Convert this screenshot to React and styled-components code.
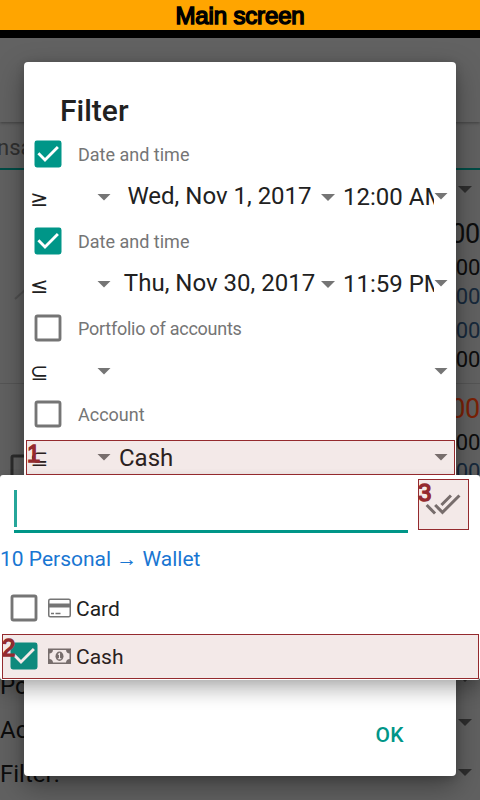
import React from "react";
import styled, { createGlobalStyle } from "styled-components";

const Global = createGlobalStyle`
  * { box-sizing: border-box; }
  body { margin: 0; background: #616161; }
`;

const Screen = styled.div`
  position: relative;
  width: 480px;
  height: 800px;
  overflow: hidden;
  background: #616161;
  color: #212121;
  font-family: Roboto, sans-serif;
  white-space: nowrap;
`;

const Banner = styled.h1`
  margin: 0;
  height: 30px;
  background: #ffa500;
  color: #000;
  font: 400 24px/31px "Liberation Sans", sans-serif;
  letter-spacing: -0.15px;
  text-align: center;
  -webkit-text-stroke: 1.5px #000;
`;

const StatusBar = styled.div`
  height: 8px;
  background: #000;
`;

const AppBar = styled.div`
  height: 84px;
  background: #626262;
  box-shadow: 0 1px 3px rgba(0, 0, 0, 0.35);
`;

const TabStrip = styled.div`
  height: 48px;
  padding-top: 13px;
  border-bottom: 2px solid #004c46;
  color: #303030;
  font-size: 22px;
  line-height: 26px;
  text-indent: -3px;
`;

const Backdrop = styled.div`
  display: flex;
  justify-content: space-between;
  height: 630px;
`;

const LeftColumn = styled.div`
  flex: 1;
`;

const ChevronCell = styled.div`
  height: 214px;
  padding: 115px 0 0 14px;
  border-bottom: 1px solid #555;
`;

const BoxCell = styled.div`
  height: 280px;
  padding: 66px 0 0 6px;
`;

const BackLabel = styled.div`
  height: 44px;
  font-size: 24px;
  line-height: 44px;
  color: #0d0d0d;
`;

const RightColumn = styled.div`
  display: flex;
  flex-direction: column;
  align-items: flex-end;
  width: 80px;
`;

const Amount = styled.div`
  flex: none;
  height: ${(p) => p.$h}px;
  line-height: ${(p) => p.$h + 2}px;
  font-size: ${(p) => (p.$big ? 27 : 22)}px;
  letter-spacing: -0.3px;
  color: ${(p) => p.$color || "#0d0d0d"};
`;

const Rule = styled.div`
  flex: none;
  width: 100%;
  height: 1px;
  margin-top: 9px;
  background: #555;
`;

const ArrowSlot = styled.div`
  display: flex;
  flex: none;
  align-items: center;
  height: ${(p) => p.$h}px;
  margin-top: ${(p) => p.$gap || 0}px;
  padding-right: 8px;
`;

const Arrow = styled.span`
  flex: none;
  width: 14px;
  height: 7px;
  margin-top: ${(p) => p.$drop || 0}px;
  background: ${(p) => p.$color || "#757575"};
  clip-path: polygon(0 0, 100% 0, 50% 100%);
`;

const Dialog = styled.section`
  position: absolute;
  left: 24px;
  top: 62px;
  width: 432px;
  height: 714px;
  padding: 26px 0 0 6px;
  display: flex;
  flex-direction: column;
  border-radius: 4px;
  background: #fff;
  box-shadow: 0 10px 28px rgba(0, 0, 0, 0.36), 0 2px 8px rgba(0, 0, 0, 0.16);
`;

const Title = styled.h2`
  margin: 0 0 0 30px;
  height: 44px;
  font-size: 30px;
  font-weight: 500;
  line-height: 46px;
`;

const Condition = styled.div`
  height: ${(p) => p.$h || 87}px;
`;

const CheckLine = styled.label`
  display: flex;
  align-items: center;
  gap: 12px;
  height: 44px;
  color: #757575;
  font-size: 18px;
  letter-spacing: ${(p) => p.$tracking || 0}px;
`;

const ValueLine = styled.div`
  display: flex;
  align-items: center;
  height: 42px;
  font-size: 24px;
`;

const Operator = styled.span`
  display: flex;
  align-items: center;
  justify-content: space-between;
  width: 81px;
`;

const Symbol = styled.span`
  padding-top: 3px;
  font: 22px/26px "DejaVu Sans", sans-serif;
`;

const DateValue = styled.span`
  width: 210px;
  padding: 0 0 2px 7px;
  text-align: center;
`;

const TimeValue = styled.span`
  width: 91px;
  margin-left: 8px;
  overflow: hidden;
`;

const AccountValue = styled.span`
  width: 323px;
  padding: 2px 0 0 8px;
`;

const OkButton = styled.button`
  align-self: flex-end;
  margin: auto 36px 23px 0;
  padding: 0 16px;
  height: 36px;
  border: 0;
  background: none;
  color: #009688;
  font: 500 21px/36px Roboto, sans-serif;
  letter-spacing: 0.4px;
`;

const Popup = styled.section`
  position: absolute;
  left: 0;
  top: 475px;
  width: 480px;
  height: 205px;
  border-radius: 3px;
  background: #fff;
  box-shadow: 0 12px 18px rgba(0, 0, 0, 0.24), 0 2px 8px rgba(0, 0, 0, 0.1);
`;

const SearchRow = styled.div`
  display: flex;
  height: 58px;
  padding-left: 14px;
`;

const SearchField = styled.div`
  width: 394px;
  padding-top: 15px;
  border-bottom: 3px solid #009688;
`;

const Caret = styled.div`
  width: 3px;
  height: 37px;
  background: #26a69a;
`;

const SelectAll = styled.div`
  display: flex;
  margin: 11px 0 0 17px;
  height: 36px;
`;

const GroupName = styled.div`
  height: 51px;
  color: #1976d2;
  font-size: 21px;
  line-height: 52px;
`;

const Option = styled.label`
  display: flex;
  align-items: center;
  height: 48px;
  padding-left: 6px;
  font-size: 21px;
`;

const OptionIcon = styled.span`
  display: flex;
  margin: 0 5px 0 6px;
`;

const OptionName = styled.span`
  padding-top: 2px;
`;

const Highlight = styled.div`
  position: absolute;
  left: ${(p) => p.$x}px;
  top: ${(p) => p.$y}px;
  width: ${(p) => p.$w}px;
  height: ${(p) => p.$h}px;
  border: 1px solid #942a2e;
  background: rgba(135, 40, 30, 0.1);
  color: #942a2e;
  font: 400 24px/26px "Liberation Sans", sans-serif;
  text-indent: ${(p) => p.$indent || 0}px;
  -webkit-text-stroke: 1.4px #942a2e;
`;

const Tick = ({ on }) => (
  <svg width="36" height="36" viewBox="0 0 24 24">
    {on ? (
      <>
        <rect x="3" y="3" width="18" height="18" rx="1.6" fill="#009688" />
        <path d="M5.600 11.500l4.400 4.500 8.600-8.700" fill="none" stroke="#fff" strokeWidth="1.900" />
      </>
    ) : (
      <rect x="4" y="4" width="16" height="16" rx="1" fill="none" stroke="#757575" strokeWidth="1.900" />
    )}
  </svg>
);

const DoubleCheck = () => (
  <svg width="36" height="36" viewBox="0 0 24 24" fill="#757575">
    <path d="M18 7l-1.41-1.41-6.34 6.34 1.41 1.41L18 7zm4.24-1.41L11.66 16.17 7.48 12l-1.41 1.41L11.66 19l12-12-1.42-1.41zM.41 13.41L6 19l1.41-1.41L1.83 12 .41 13.41z" />
  </svg>
);

const CardIcon = () => (
  <svg width="23" height="20" viewBox="0 0 23 20">
    <rect x=".75" y="1.250" width="21.500" height="17.500" rx="1.500" fill="none" stroke="#757575" strokeWidth="1.500" />
    <path d="M0 5.500h23v4H0z" fill="#757575" />
    <path d="M3 15.500h3M7.500 15.500h5" stroke="#757575" strokeWidth="1.300" />
  </svg>
);

const CashIcon = () => (
  <svg width="23" height="20" viewBox="0 0 23 20">
    <rect x=".75" y="3.250" width="21.500" height="14" fill="none" stroke="#757575" strokeWidth="1.500" />
    <path d="M1 3.500h4a4 4 0 0 1-4 4zM22 3.500v4a4 4 0 0 1-4-4zM1 17v-4a4 4 0 0 1 4 4zM22 17h-4a4 4 0 0 1 4-4z" fill="#757575" />
    <ellipse cx="11.500" cy="10.200" rx="4" ry="4.700" fill="#757575" />
    <path d="M10 8.500l1.500-1v5M9.800 12.800h3.500" fill="none" stroke="#fff" strokeWidth="1.100" />
  </svg>
);

const DateCondition = ({ symbol, date, time }) => (
  <Condition>
    <CheckLine><Tick on />Date and time</CheckLine>
    <ValueLine>
      <Operator><Symbol>{symbol}</Symbol><Arrow /></Operator>
      <DateValue>{date}</DateValue>
      <Arrow $drop={1} />
      <TimeValue>{time}</TimeValue>
      <Arrow $drop={-2} />
    </ValueLine>
  </Condition>
);

const AccountCondition = ({ label, value, h, tracking }) => (
  <Condition $h={h}>
    <CheckLine $tracking={tracking}><Tick />{label}</CheckLine>
    <ValueLine>
      <Operator><Symbol>⊆</Symbol><Arrow /></Operator>
      <AccountValue>{value}</AccountValue>
      <Arrow />
    </ValueLine>
  </Condition>
);

export default function App() {
  return (
    <Screen>
      <Global />
      <Banner>Main screen</Banner>
      <StatusBar />
      <AppBar />
      <TabStrip>nsactions</TabStrip>
      <Backdrop>
        <LeftColumn>
          <ChevronCell>
            <svg width="24" height="16" viewBox="0 0 24 16">
              <path d="M1 14L12 4l11 10" fill="none" stroke="#505050" strokeWidth="2" />
            </svg>
          </ChevronCell>
          <BoxCell>
            <svg width="36" height="36" viewBox="0 0 24 24">
              <rect x="4" y="4" width="16" height="16" rx="1" fill="none" stroke="#2c2c2c" strokeWidth="2" />
            </svg>
          </BoxCell>
          <BackLabel>Portfolio:</BackLabel>
          <BackLabel>Account:</BackLabel>
          <BackLabel>Filter:</BackLabel>
        </LeftColumn>
        <RightColumn>
          <ArrowSlot $h={39}><Arrow $color="#2e2e2e" /></ArrowSlot>
          <Amount $h={49} $big>500.00</Amount>
          <Amount $h={18}>100.00</Amount>
          <Amount $h={40} $color="#17293b">50.00</Amount>
          <Amount $h={27} $color="#17293b">250.00</Amount>
          <Amount $h={31}>700.00</Amount>
          <Rule />
          <Amount $h={49} $big $color="#7a2106">200.00</Amount>
          <Amount $h={17}>100.00</Amount>
          <Amount $h={42} $color="#17293b">50.00</Amount>
          <ArrowSlot $h={43} $gap={165}><Arrow $color="#2e2e2e" /></ArrowSlot>
          <ArrowSlot $h={45}><Arrow $color="#2e2e2e" /></ArrowSlot>
          <ArrowSlot $h={55}><Arrow $color="#2e2e2e" /></ArrowSlot>
        </RightColumn>
      </Backdrop>

      <Dialog>
        <Title>Filter</Title>
        <DateCondition symbol="≥" date="Wed, Nov 1, 2017" time="12:00 AM" />
        <DateCondition symbol="≤" date="Thu, Nov 30, 2017" time="11:59 PM" />
        <AccountCondition label="Portfolio of accounts" value="" h={86} tracking={-0.25} />
        <AccountCondition label="Account" value="Cash" />
        <OkButton>OK</OkButton>
      </Dialog>

      <Popup>
        <SearchRow>
          <SearchField><Caret /></SearchField>
          <SelectAll><DoubleCheck /></SelectAll>
        </SearchRow>
        <GroupName>10 Personal → Wallet</GroupName>
        <Option><Tick /><OptionIcon><CardIcon /></OptionIcon><OptionName>Card</OptionName></Option>
        <Option><Tick on /><OptionIcon><CashIcon /></OptionIcon><OptionName>Cash</OptionName></Option>
      </Popup>

      <Highlight $x={26} $y={440} $w={429} $h={35}>1</Highlight>
      <Highlight $x={2} $y={634} $w={477} $h={45} $indent={-1}>2</Highlight>
      <Highlight $x={418} $y={479} $w={51} $h={51} $indent={-1}>3</Highlight>
    </Screen>
  );
}
